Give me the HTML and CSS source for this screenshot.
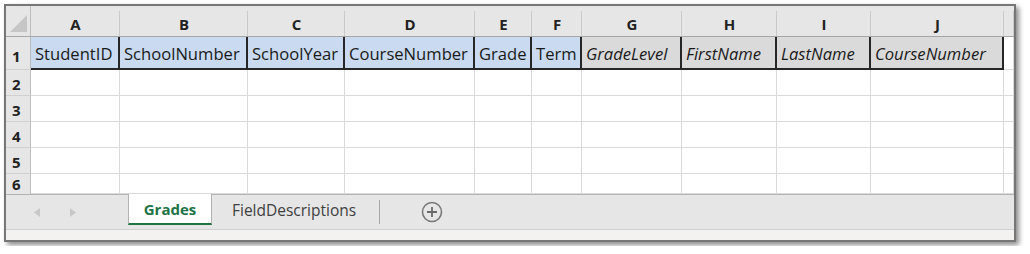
FILE: index.html
```html
<!DOCTYPE html>
<html lang="en">
<head>
  <meta charset="UTF-8" />
  <title>Grades sheet</title>
  <link rel="stylesheet" href="styles.css">
</head>
<body>

  <div class="sheet">
    <div class="grid">
      <div class="corner">
        <svg width="17" height="17" viewBox="0 0 17 17"><polygon points="17,0 17,17 0,17" fill="#c6c6c6"/></svg>
      </div>
      <div class="col-h">A</div>
      <div class="col-h">B</div>
      <div class="col-h">C</div>
      <div class="col-h">D</div>
      <div class="col-h">E</div>
      <div class="col-h">F</div>
      <div class="col-h">G</div>
      <div class="col-h">H</div>
      <div class="col-h">I</div>
      <div class="col-h">J</div>
      <div class="col-h"></div>

      <div class="row-h first">1</div>
      <div class="cell field">StudentID</div>
      <div class="cell field">SchoolNumber</div>
      <div class="cell field">SchoolYear</div>
      <div class="cell field">CourseNumber</div>
      <div class="cell field">Grade</div>
      <div class="cell field">Term</div>
      <div class="cell field extra">GradeLevel</div>
      <div class="cell field extra">FirstName</div>
      <div class="cell field extra">LastName</div>
      <div class="cell field extra">CourseNumber</div>
      <div class="cell"></div>

      <div class="row-h">2</div>
      <div class="cell"></div><div class="cell"></div><div class="cell"></div><div class="cell"></div>
      <div class="cell"></div><div class="cell"></div><div class="cell"></div><div class="cell"></div>
      <div class="cell"></div><div class="cell"></div><div class="cell"></div>

      <div class="row-h">3</div>
      <div class="cell"></div><div class="cell"></div><div class="cell"></div><div class="cell"></div>
      <div class="cell"></div><div class="cell"></div><div class="cell"></div><div class="cell"></div>
      <div class="cell"></div><div class="cell"></div><div class="cell"></div>

      <div class="row-h">4</div>
      <div class="cell"></div><div class="cell"></div><div class="cell"></div><div class="cell"></div>
      <div class="cell"></div><div class="cell"></div><div class="cell"></div><div class="cell"></div>
      <div class="cell"></div><div class="cell"></div><div class="cell"></div>

      <div class="row-h">5</div>
      <div class="cell"></div><div class="cell"></div><div class="cell"></div><div class="cell"></div>
      <div class="cell"></div><div class="cell"></div><div class="cell"></div><div class="cell"></div>
      <div class="cell"></div><div class="cell"></div><div class="cell"></div>

      <div class="row-h last">6</div>
      <div class="cell"></div><div class="cell"></div><div class="cell"></div><div class="cell"></div>
      <div class="cell"></div><div class="cell"></div><div class="cell"></div><div class="cell"></div>
      <div class="cell"></div><div class="cell"></div><div class="cell"></div>
    </div>

    <div class="tabs">
      <div class="tab-nav">
        <svg width="6" height="9" viewBox="0 0 6 9"><polygon points="6,0 6,9 0,4.5" fill="#c8c8c8"/></svg>
        <svg width="6" height="9" viewBox="0 0 6 9"><polygon points="0,0 0,9 6,4.5" fill="#c8c8c8"/></svg>
      </div>
      <div class="tab active">Grades</div>
      <div class="tab">FieldDescriptions</div>
      <div class="tab-sep"></div>
      <div class="tab-add">
        <svg width="22" height="22" viewBox="0 0 22 22">
          <circle cx="11" cy="11" r="9.5" fill="none" stroke="#7a7a7a" stroke-width="1.6"/>
          <path d="M11 6v10M6 11h10" stroke="#6a6a6a" stroke-width="1.8"/>
        </svg>
      </div>
    </div>

    <div class="status"></div>
  </div>

</body>
</html>
```

FILE: styles.css
```css
* {
  box-sizing: border-box;
}

body {
  margin: 0;
  padding: 4px;
  background: #fff;
  font-family: "Open Sans", sans-serif;
  color: #1a1a1a;
}

.sheet {
  width: 1012px;
  height: 238px;
  border: 2px solid #767676;
  box-shadow: 3px 3px 5px rgba(0,0,0,0.45);
  display: flex;
  flex-direction: column;
  overflow: hidden;
}

.grid {
  display: grid;
  grid-template-columns: 25px 89px 128px 97px 130px 57px 50px 100px 95px 94px 133px 10px;
  grid-template-rows: 31px 33px 26px 26px 26px 26px 20px;
  overflow: hidden;
}

.corner {
  background: #e6e6e6;
  border-right: 1px solid #bdbdbd;
  border-bottom: 1px solid #a6a6a6;
  display: flex;
  align-items: flex-end;
  justify-content: flex-end;
  padding: 0 3px 4px 0;
}

.col-h {
  background: linear-gradient(#cacaca, #cacaca) right bottom / 1px 25px no-repeat, #e6e6e6;
  border-bottom: 1px solid #a6a6a6;
  display: flex;
  align-items: center;
  justify-content: center;
  padding-top: 6px;
  font-size: 15px;
  font-weight: 700;
  color: #222;
}

.row-h {
  background: #e6e6e6;
  border-right: 1px solid #bdbdbd;
  border-bottom: 1px solid #d0d0d0;
  display: flex;
  align-items: center;
  padding: 3px 0 0 6px;
  font-size: 15px;
  font-weight: 700;
  color: #222;
}

.row-h.first {
  align-items: flex-end;
  padding-bottom: 3px;
}

.row-h.last {
  border-bottom: none;
  padding-top: 0;
}

.cell {
  border-right: 1px solid #dadada;
  border-bottom: 1px solid #dadada;
}

.cell.field {
  background: #c9daf1;
  border-right: 2px solid #262626;
  border-bottom: 2px solid #262626;
  display: flex;
  align-items: flex-end;
  padding: 0 0 4px 4px;
  font-size: 16.6px;
  line-height: 1.2;
  white-space: nowrap;
  overflow: hidden;
}

.cell.extra {
  background: #dadada;
  font-style: italic;
}

.tabs {
  height: 36px;
  background: #e6e6e6;
  border-top: 1px solid #b3b3b3;
  border-bottom: 1px solid #d0d0d0;
  display: flex;
  align-items: flex-start;
}

.tab-nav {
  width: 122px;
  display: flex;
  gap: 30px;
  padding: 13px 0 0 28px;
}

.tab {
  height: 29px;
  padding: 0 23px 0 20px;
  display: flex;
  align-items: center;
  font-size: 15.5px;
  color: #404040;
}

.tab.active {
  width: 84px;
  margin-top: -1px;
  height: 31px;
  background: #fff;
  border-left: 1px solid #b3b3b3;
  border-right: 1px solid #b3b3b3;
  border-bottom: 2px solid #217346;
  justify-content: center;
  padding: 0;
  font-size: 15px;
  font-weight: 700;
  color: #217346;
}

.tab-sep {
  width: 1px;
  height: 24px;
  margin-top: 5px;
  background: #a8a8a8;
}

.tab-add {
  padding: 6px 0 0 41px;
}

.status {
  flex: 1;
  background: #f3f2f1;
}
```
